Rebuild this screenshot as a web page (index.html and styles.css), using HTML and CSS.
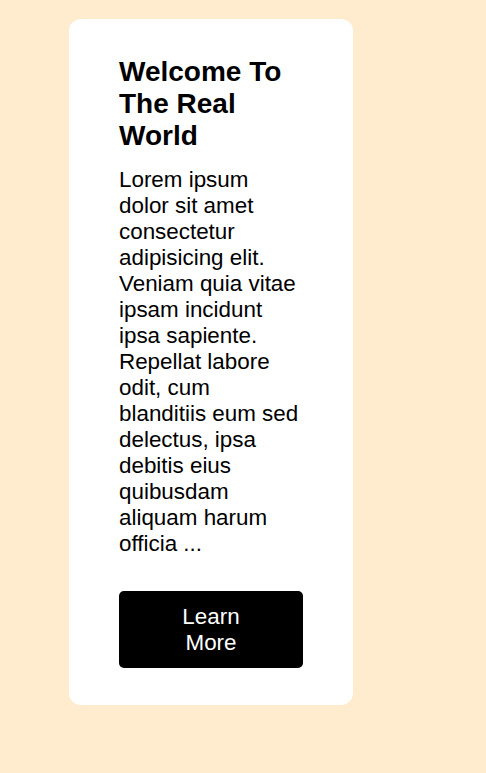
FILE: index.html
```html
<!DOCTYPE html>
<html lang="en">
<head>
<meta charset="utf-8">
<title>Welcome</title>
<link rel="stylesheet" href="styles.css">
</head>
<body>
  <div class="card">
    <h1 class="card-title">Welcome To The Real World</h1>
    <p class="card-text">Lorem ipsum dolor sit amet consectetur adipisicing elit. Veniam quia vitae ipsam incidunt ipsa sapiente. Repellat labore odit, cum blanditiis eum sed delectus, ipsa debitis eius quibusdam aliquam harum officia ...</p>
    <button class="card-button">Learn More</button>
  </div>
</body>
</html>
```

FILE: styles.css
```css
html, body {
  margin: 0;
  padding: 0;
}
body {
  background: #ffebcd;
  font-family: "Liberation Sans", Arial, sans-serif;
  padding: 19px 0 0 69px;
  min-height: 773px;
  box-sizing: border-box;
}
.card {
  width: 184px;
  background: #fff;
  border-radius: 12px;
  padding: 37px 50px;
  display: flex;
  flex-direction: column;
  align-items: stretch;
}
.card-title {
  margin: 0 0 14px;
  font-size: 28px;
  font-weight: bold;
  line-height: 32.2px;
  color: #000;
}
.card-text {
  margin: 0 0 34.5px;
  font-size: 22.4px;
  line-height: 26px;
  color: #000;
}
.card-button {
  display: block;
  width: 184px;
  background: #000;
  color: #fff;
  border: none;
  border-radius: 5px;
  padding: 12.5px 40px;
  font-family: "Liberation Sans", Arial, sans-serif;
  font-size: 22.4px;
  line-height: 26px;
  text-align: center;
}
```
